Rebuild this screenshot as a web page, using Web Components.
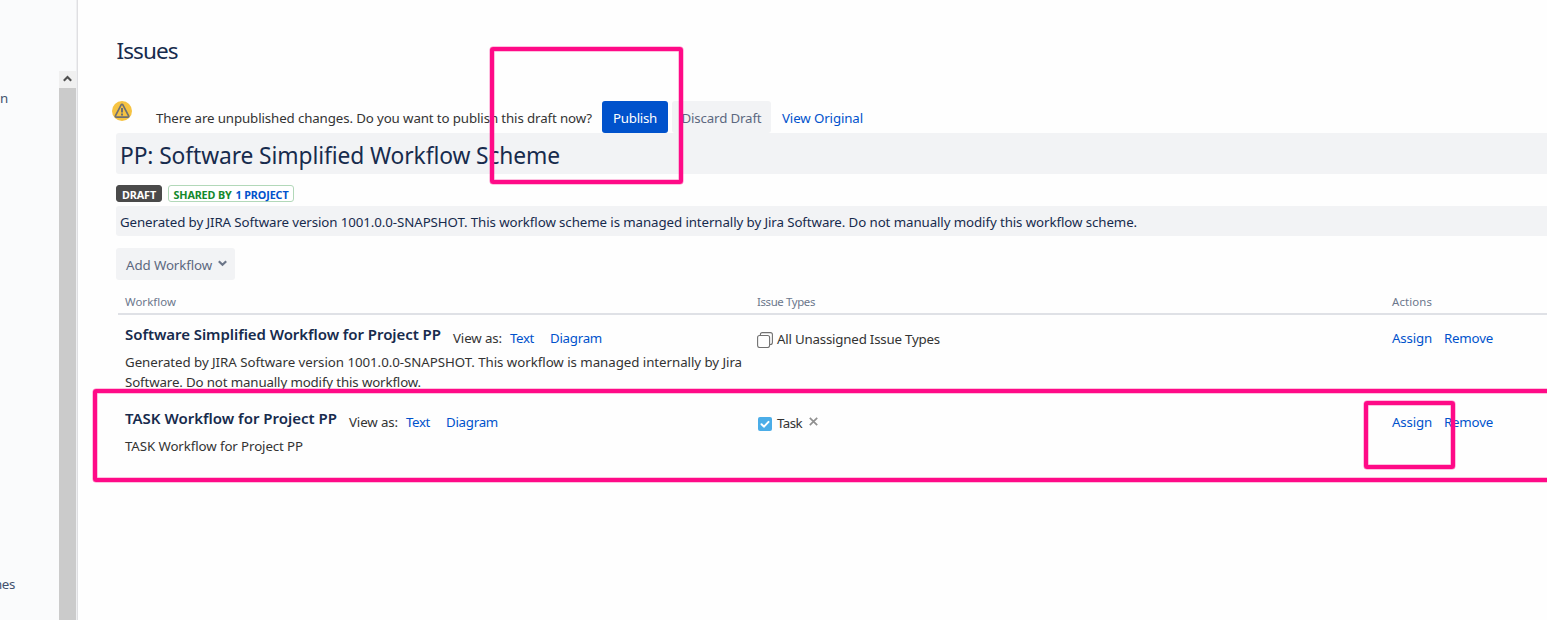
<!DOCTYPE html>
<html lang="en"><head><meta charset="utf-8"><title>Issues</title>
<style>
html,body{margin:0;height:100%;overflow:hidden}
body{background:#fefefe;font:13.3px/20px "Noto Sans","Open Sans",sans-serif;color:#333;font-kerning:normal}
</style></head><body>
<workflow-app></workflow-app>
<script>
function component(name, html, after) {
  const t = document.createElement('template');
  t.innerHTML = html;
  customElements.define(name, class extends HTMLElement {
    connectedCallback() {
      if (this.shadowRoot) return;
      this.attachShadow({mode: 'open'}).append(t.content.cloneNode(true));
      if (after) after(this);
    }
  });
}

component('workflow-app', `<style>
:host{display:flex;position:relative;width:1547px;height:620px;overflow:hidden}
main{flex:1;min-width:0;padding-left:38px;display:flex;flex-direction:column}
h1,h2,p{margin:0;font-weight:400}
h1{height:32px;line-height:32px;font-size:22.5px;color:#172b4d;margin-top:35px}
.notice{display:flex;margin:34px 0 0 -4px;height:32px}
.notice svg{margin-right:24px;flex:none}
.notice>fit-text{margin-top:7px;margin-right:10px}
.name{height:41px;background:#f2f3f5;border-radius:3px 0 0 3px;padding-left:4px;box-sizing:border-box;font-size:22.8px;line-height:45px;color:#172b4d}
.badges{display:flex;gap:6px;margin-top:11px;height:17px}
.desc{margin-top:4px;height:30px;line-height:33px;background:#f2f3f5;border-radius:3px 0 0 3px;padding-left:4px;color:#172b4d}
.add{margin-top:12px;display:flex}
</style>
<side-bar></side-bar>
<main>
<h1><fit-text w="61" style="margin-left:.5px">Issues</fit-text></h1>
<div class="notice"><svg width="20" height="20" viewBox="0 0 20 20"><circle cx="10" cy="10" r="10" fill="#f6c342"/><path d="M9 4.1Q10 2.8 11 4.1L16.6 14.8Q17 16.2 15.7 16.2H4.3Q3 16.2 3.4 14.8Z" fill="none" stroke="#707070" stroke-width="1.7" stroke-linejoin="round"/><path d="M10 7v4.4M10 12.6v1.8" stroke="#707070" stroke-width="2"/></svg><fit-text w="436">There are unpublished changes. Do you want to publish this draft now?</fit-text><ui-button style="--w:66px;--bg:#0052cc;color:#fff"><fit-text w="44">Publish</fit-text></ui-button><ui-button style="--w:99px;margin:0 11px 0 4px;color:#5c6880"><fit-text w="80">Discard Draft</fit-text></ui-button><text-link style="margin-top:7px"><fit-text w="81">View Original</fit-text></text-link></div>
<h2 class="name"><fit-text w="440">PP: Software Simplified Workflow Scheme</fit-text></h2>
<div class="badges"><status-badge style="--w:46px;--bg:#4a4a4a;--line:#4a4a4a;color:#fff"><fit-text w="34">DRAFT</fit-text></status-badge><status-badge style="--w:126px;--bg:#fff;--line:#b2d8b9;color:#14892c"><fit-text w="58">SHARED BY</fit-text><fit-text w="53" style="color:#0052cc;margin-left:4px">1 PROJECT</fit-text></status-badge></div>
<p class="desc"><fit-text w="1017">Generated by JIRA Software version 1001.0.0-SNAPSHOT. This workflow scheme is managed internally by Jira Software. Do not manually modify this workflow scheme.</fit-text></p>
<div class="add"><ui-button style="--w:119px;color:#5c6880"><fit-text w="86">Add Workflow</fit-text><svg width="9" height="7" viewBox="0 0 9 7" style="margin:0 -2px 3px 6px"><path d="M.8 1.3L4.5 4.8L8.2 1.3" fill="none" stroke="#6b7588" stroke-width="2.2"/></svg></ui-button></div>
<workflow-table></workflow-table>
</main>
<mark-box style="left:490px;top:47px;width:193px;height:137px"></mark-box>
<mark-box style="left:93px;top:389px;width:1470px;height:93px"></mark-box>
<mark-box style="left:1364px;top:401px;width:91px;height:68px"></mark-box>`);

component('side-bar', `<style>
:host{display:flex;width:77px;border-right:1px solid #dfdfe2;flex:none;height:620px;background:#fafbfc;color:#42526e;overflow:hidden;box-shadow:inset -1px 0 #eeeff1}
nav{width:59px;display:flex;flex-direction:column;padding-top:88px;box-sizing:border-box}
.last{margin-top:466px}
.bar{width:17px;margin-top:71px;background:#cbcbcb}
.up{height:17px;background:#f0f0f0;display:flex;align-items:center;justify-content:center}
.up svg{margin-bottom:2px}
</style><nav><fit-text w="8">n</fit-text><fit-text class="last" w="21" style="margin-left:-6px">nes</fit-text></nav>
<div class="bar"><div class="up"><svg width="9" height="7" viewBox="0 0 9 7"><path d="M.8 5.7L4.5 2L8.2 5.7" fill="none" stroke="#505050" stroke-width="2.1"/></svg></div></div>`);

component('ui-button', `<style>:host{display:flex;align-items:center;justify-content:center;box-sizing:border-box;width:var(--w);height:32px;padding-top:2px;border-radius:3px;background:var(--bg,#f2f3f5);flex:none}</style><slot></slot>`);
component('status-badge', `<style>:host{display:flex;align-items:center;justify-content:center;box-sizing:border-box;width:var(--w);height:17px;padding-top:2px;border:1px solid var(--line);border-radius:3px;background:var(--bg);font-size:10.8px;font-weight:700;line-height:15px}</style><slot></slot>`);
component('text-link', `<style>:host{display:block;color:#0052cc}</style><slot></slot>`);
component('mark-box', `<style>:host{position:absolute;box-sizing:border-box;border:4px solid #ff0a87;border-radius:3px;box-shadow:0 0 0 .5px #ff0a8780,inset 0 0 0 .5px #ff0a8780}</style>`);

component('workflow-table', `<style>
:host{display:block;margin-left:2px}
.head{display:grid;grid-template-columns:632px 635px 1fr;padding:12px 0 0 7px;height:35px;box-sizing:border-box;border-bottom:2px solid #dfe1e6;color:#6b778c;font-size:11.4px}
</style><div class="head"><fit-text w="51">Workflow</fit-text><fit-text w="58">Issue Types</fit-text><fit-text w="40">Actions</fit-text></div>
<workflow-row><fit-text slot="title" w="316">Software Simplified Workflow for Project PP</fit-text>
<fit-text slot="desc" w="617">Generated by JIRA Software version 1001.0.0-SNAPSHOT. This workflow is managed internally by Jira</fit-text><fit-text slot="desc" w="296">Software. Do not manually modify this workflow.</fit-text>
<svg slot="type" width="16" height="16" viewBox="0 0 16 16" fill="none" stroke="#707070" stroke-width="1.1"><rect x=".6" y="3.5" width="12" height="12" rx="2"/><path d="M3.4 3.3V2.5Q3.4.6 5.3.6H13.4Q15.4.6 15.4 2.6V10.5Q15.4 12.5 13.4 12.5H12.8"/></svg><fit-text slot="type" w="163" style="margin-left:4px">All Unassigned Issue Types</fit-text></workflow-row>
<workflow-row><fit-text slot="title" w="212">TASK Workflow for Project PP</fit-text>
<fit-text slot="desc" w="178">TASK Workflow for Project PP</fit-text>
<svg slot="type" width="16" height="16" viewBox="0 0 16 16"><rect x="1" y="1" width="14" height="14" rx="2" fill="#4bade8"/><path d="M4.5 8.2L7 10.6L11.5 5.9" fill="none" stroke="#fff" stroke-width="2" stroke-linecap="round"/></svg><fit-text slot="type" w="25" style="margin-left:4px">Task</fit-text><svg slot="type" width="9" height="9" viewBox="0 0 9 9" style="margin:0 0 6px 7px"><path d="M.8.8L8.2 8.2M8.2.8L.8 8.2" stroke="#909090" stroke-width="1.7"/></svg></workflow-row>`);

component('workflow-row', `<style>
:host{display:grid;grid-template-columns:632px 635px 1fr;height:84px;padding-left:7px}
.line{display:flex;height:37px;padding-top:13px;box-sizing:border-box}
.title{font-size:15px;font-weight:600;color:#172b4d;margin:-4px 12px 0 0}
.desc{display:flex;flex-direction:column}
.type{display:flex;align-items:center;height:20px;margin-top:15px}
.type ::slotted(svg){flex:none}
.type ::slotted(fit-text){margin-top:-3px}
</style><div><div class="line"><div class="title"><slot name="title"></slot></div><fit-text w="49">View as:</fit-text><text-link style="margin-left:8px"><fit-text w="24">Text</fit-text></text-link><text-link style="margin-left:16px"><fit-text w="52">Diagram</fit-text></text-link></div><div class="desc"><slot name="desc"></slot></div></div>
<div class="type"><slot name="type"></slot></div>
<div class="line"><text-link><fit-text w="40">Assign</fit-text></text-link><text-link style="margin-left:12px"><fit-text w="49">Remove</fit-text></text-link></div>`);

// Spaces a single line of text so that it fills the width in its w attribute.
component('fit-text', `<style>:host{display:inline-block;white-space:nowrap;flex:none}span{display:inline-block}</style><span><slot></slot></span>`, el => {
  const w = +el.getAttribute('w'), n = el.textContent.length;
  const natural = el.shadowRoot.querySelector('span').getBoundingClientRect().width;
  if (n > 1) el.style.letterSpacing = ((w - natural) / n) + 'px';
  el.style.width = w + 'px';
});
</script></body></html>
